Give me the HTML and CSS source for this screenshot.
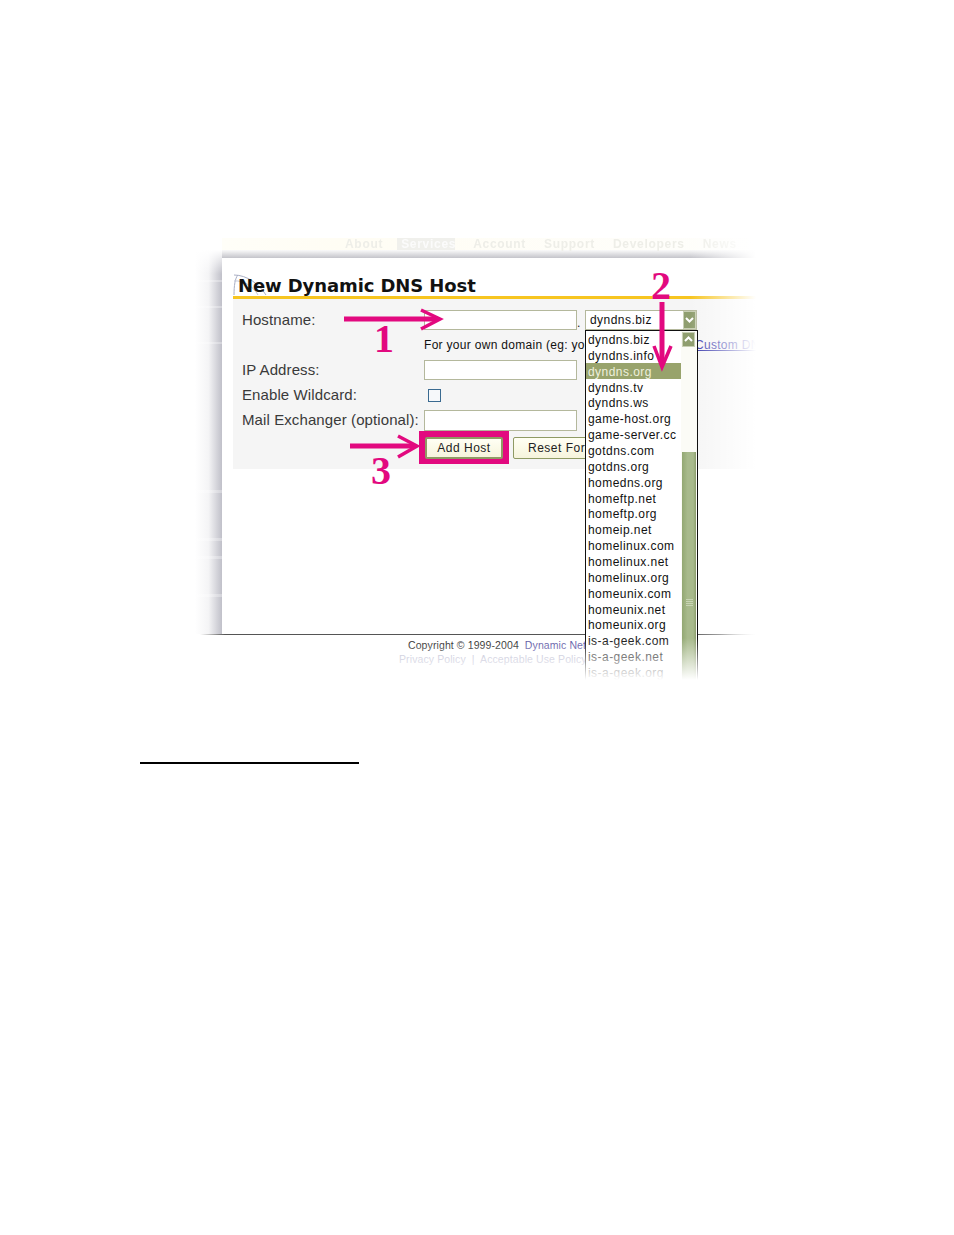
FILE: index.html
```html
<!DOCTYPE html>
<html lang="en">
  <head>
    <title>New Dynamic DNS Host</title>
    <meta charset="UTF-8">
    <link rel="stylesheet" href="styles.css">
  </head>
  <body>
    <div class="figure">
      <div class="nav">
        <span class="tab tab-about">About</span>
        <span class="tab tab-active">Services</span>
        <span class="tab">Account</span>
        <span class="tab">Support</span>
        <span class="tab">Developers</span>
        <span class="tab">News</span>
      </div>
      <div class="shell">
        <div class="panel">
          <div class="heading">
            <svg class="swirl" width="36" height="24" viewBox="0 0 36 24">
              <path d="M1 23C1 14 2 6 5 3" fill="none" stroke="#a9aec4"/>
              <path d="M1 3C14 3 26 12 33 23" fill="none" stroke="#a9aec4"/>
              <path d="M1 9C10 8 20 14 25 23" fill="none" stroke="#c3c7d6"/>
            </svg>
            <h1>New Dynamic DNS Host</h1>
          </div>
          <div class="form">
            <label>Hostname:</label>
            <input class="field" type="text">
            <span class="dot">.</span>
            <div class="select">
              <span>dyndns.biz</span>
              <span class="arrow-btn">
                <svg width="13" height="15" viewBox="0 0 13 15"><path d="M3 6l3.500 3.500L10 6" fill="none" stroke="#fff" stroke-width="2"/></svg>
              </span>
            </div>

            <div class="hint">
              <span class="hint-text">For your own domain (eg: yourdomain.com), use our</span>
              <a class="link">Custom DNS</a>
            </div>

            <label>IP Address:</label>
            <input class="field" type="text">
            <span></span><span></span>

            <label>Enable Wildcard:</label>
            <div><span class="check"></span></div>
            <span></span><span></span>

            <label>Mail Exchanger (optional):</label>
            <input class="field" type="text">
            <span></span><span></span>

            <span></span>
            <div class="buttons">
              <div class="highlight-box"><button class="btn btn-add">Add Host</button></div>
              <button class="btn btn-reset">Reset Form</button>
            </div>
          </div>
        </div>
      </div>
      <div class="rule"></div>
      <div class="footer">
        <div>Copyright &copy; 1999-2004 &nbsp;<a class="foot-link">Dynamic Network Services, Inc.</a></div>
        <div class="foot-links">Privacy Policy &nbsp;|&nbsp; Acceptable Use Policy</div>
      </div>

      <div class="fade-right"></div>

      <div class="list">
        <div class="items">
          <div>dyndns.biz</div>
          <div>dyndns.info</div>
          <div class="selected">dyndns.org</div>
          <div>dyndns.tv</div>
          <div>dyndns.ws</div>
          <div>game-host.org</div>
          <div>game-server.cc</div>
          <div>gotdns.com</div>
          <div>gotdns.org</div>
          <div>homedns.org</div>
          <div>homeftp.net</div>
          <div>homeftp.org</div>
          <div>homeip.net</div>
          <div>homelinux.com</div>
          <div>homelinux.net</div>
          <div>homelinux.org</div>
          <div>homeunix.com</div>
          <div>homeunix.net</div>
          <div>homeunix.org</div>
          <div>is-a-geek.com</div>
          <div>is-a-geek.net</div>
          <div>is-a-geek.org</div>
        </div>
        <div class="scrollbar">
          <span class="arrow-btn scroll-up">
            <svg width="13" height="15" viewBox="0 0 13 15"><path d="M3 9l3.500-3.500L10 9" fill="none" stroke="#fff" stroke-width="2"/></svg>
          </span>
          <div class="thumb"><span class="grip"></span></div>
        </div>
      </div>

      <div class="fade-bottom"></div>

      <svg class="arrows" width="590" height="460" viewBox="0 0 590 460">
        <path d="M154 89H248" stroke="#e2097f" stroke-width="5" fill="none"/>
        <path d="M231 80L250 89L231 99" stroke="#e2097f" stroke-width="3.500" fill="none"/>
        <path d="M160 216H224" stroke="#e2097f" stroke-width="5" fill="none"/>
        <path d="M208 206L227 216L208 227" stroke="#e2097f" stroke-width="3.500" fill="none"/>
        <path d="M472 72V134" stroke="#e2097f" stroke-width="5" fill="none"/>
        <path d="M464 116L472 137L481 116" stroke="#e2097f" stroke-width="3.500" fill="none"/>
      </svg>
      <span class="num num-1">1</span>
      <span class="num num-2">2</span>
      <span class="num num-3">3</span>
    </div>
    <div class="footnote-rule"></div>
  </body>
</html>
```
FILE: styles.css
```css
body {
  margin: 0;
  background: white;
  font-family: "Liberation Sans", sans-serif;
  color: #222;
}

.figure {
  position: relative;
  width: 590px;
  height: 460px;
  margin: 230px 0 0 190px;
  overflow: hidden;
}

.nav {
  display: flex;
  height: 12px;
  margin: 8px 0 0 32px;
  padding-left: 123px;
  gap: 18px;
  background: linear-gradient(to right, #fffef8, #fffdf4 120px, #fefefc);
  font-size: 12px;
  font-weight: bold;
  line-height: 12px;
  letter-spacing: 0.7px;
  color: #eeeee8;
  filter: blur(0.6px);
}

.tab-about {
  margin-right: -4px;
}

.tab-active {
  width: 58px;
  box-sizing: border-box;
  padding-left: 4px;
  background: #f0f0ec;
  color: #fbfbfb;
}

.shell {
  margin-left: 5px;
  padding: 8px 0 0 27px;
  background:
    linear-gradient(to bottom, white, rgba(255, 255, 255, 0)) left top / 27px 24px no-repeat,
    linear-gradient(to bottom, transparent 30px, rgba(255, 255, 255, 0.3) 30px, rgba(255, 255, 255, 0.3) 32px, transparent 32px, transparent 56px, rgba(255, 255, 255, 0.3) 56px, rgba(255, 255, 255, 0.3) 58px, transparent 58px, transparent 92px, rgba(255, 255, 255, 0.3) 92px, rgba(255, 255, 255, 0.3) 94px, transparent 94px, transparent 240px, rgba(255, 255, 255, 0.3) 240px, rgba(255, 255, 255, 0.3) 243px, transparent 243px, transparent 288px, rgba(255, 255, 255, 0.3) 288px, rgba(255, 255, 255, 0.3) 291px, transparent 291px, transparent 306px, rgba(255, 255, 255, 0.3) 306px, rgba(255, 255, 255, 0.3) 309px, transparent 309px, transparent 344px, rgba(255, 255, 255, 0.3) 344px, rgba(255, 255, 255, 0.3) 347px, transparent 347px) left top / 27px 100% no-repeat,
    linear-gradient(to right, rgba(150, 150, 165, 0), rgba(150, 150, 165, 0.1) 50%, rgba(150, 150, 165, 0.6)) left top / 27px 100% no-repeat,
    linear-gradient(to bottom, #fafafa, #c4c4ca) 27px top / 100% 8px no-repeat;
}

.panel {
  height: 376px;
  background: white;
  padding-left: 11px;
  border-radius: 4px 0 0 0;
}

.heading {
  position: relative;
  height: 38px;
  display: flex;
  align-items: flex-end;
}

.swirl {
  position: absolute;
  left: 0;
  bottom: 0;
}

h1 {
  position: relative;
  margin: 0 0 -2px 5px;
  font-family: "DejaVu Sans", sans-serif;
  font-size: 18px;
  line-height: 24px;
  font-weight: bold;
  color: #111;
  letter-spacing: -0.1px;
}

.form {
  display: grid;
  grid-template-columns: 182px 153px 8px 112px;
  grid-template-rows: 20px 30px 20px 30px 21px 33px;
  align-items: center;
  height: 173px;
  box-sizing: border-box;
  padding: 11px 0 0 9px;
  border-top: 3px solid #f7c520;
  background: #f5f5f5;
  font-size: 15px;
}

label {
  padding-bottom: 2px;
  letter-spacing: 0.1px;
  color: #3a3a3a;
  white-space: nowrap;
}

.field {
  box-sizing: border-box;
  width: 153px;
  height: 100%;
  margin: 0;
  padding: 0;
  border: 1px solid #b4b89c;
  background: white;
}

.dot {
  font-size: 12px;
  padding-top: 6px;
}

.select {
  box-sizing: border-box;
  display: flex;
  justify-content: space-between;
  align-items: center;
  height: 20px;
  padding: 0 0 1px 4px;
  background: white;
  border: 1px solid #b4b89c;
  font-size: 12px;
  letter-spacing: 0.45px;
  color: #111;
}

.arrow-btn {
  display: block;
  width: 13px;
  height: 15px;
  background: #8f9e6f;
  border: 1px solid #c8cfb4;
  box-sizing: border-box;
}

.arrow-btn svg {
  display: block;
  margin: -1px;
}

.select .arrow-btn {
  height: 18px;
  margin-bottom: -1px;
  padding-top: 1px;
}

.hint {
  grid-column: 2 / 5;
  display: flex;
  font-size: 12px;
  letter-spacing: 0.3px;
  white-space: nowrap;
  color: #111;
}

.hint-text {
  flex: none;
  width: 271px;
  overflow: hidden;
}

.link {
  color: #3333aa;
  text-decoration: underline;
}

.check {
  display: block;
  box-sizing: border-box;
  width: 13px;
  height: 13px;
  margin-left: 4px;
  border: 1px solid #3a6a90;
  background: #f6f8fa;
}

.buttons {
  grid-column: 2 / 5;
  display: flex;
  align-items: center;
  margin-left: -5px;
  gap: 4px;
  height: 33px;
}

.highlight-box {
  box-sizing: border-box;
  width: 90px;
  height: 33px;
  padding: 1px;
  border: 5px solid #e2097f;
  background: #e2097f;
}

.btn {
  box-sizing: border-box;
  height: 22px;
  margin: 0;
  padding: 0;
  font-family: "Liberation Sans", sans-serif;
  font-size: 12px;
  letter-spacing: 0.5px;
  color: #222;
  background: linear-gradient(#fffff4, #f6f4dc);
  border: 1px solid #8f9a64;
  border-radius: 2px;
}

.btn-add {
  display: block;
  width: 78px;
  border: 2px solid #8f9a64;
}

.btn-reset {
  width: 90px;
  text-align: left;
  padding-left: 14px;
  white-space: nowrap;
}

.rule {
  height: 1px;
  margin: 0 10px 0 10px;
  background: linear-gradient(to right, rgba(80, 80, 80, 0), #555 25px, #555 520px, rgba(80, 80, 80, 0));
}

.footer {
  padding: 3px 0 0 218px;
  font-size: 10.500px;
  line-height: 14px;
  white-space: nowrap;
  letter-spacing: 0.1px;
}

.foot-link {
  color: #554fa0;
}

.foot-links {
  margin-left: -9px;
  color: #b4b4cc;
}

.fade-right {
  position: absolute;
  top: 0;
  right: 0;
  width: 90px;
  height: 100%;
  background: linear-gradient(to right, rgba(255, 255, 255, 0), white 66px);
}

.list {
  position: absolute;
  left: 395px;
  top: 100px;
  box-sizing: border-box;
  display: flex;
  width: 113px;
  height: 380px;
  border: 1px solid #111;
  background: white;
  overflow: hidden;
}

.items {
  width: 95px;
  font-size: 12px;
  letter-spacing: 0.45px;
  color: #111;
}

.items div {
  padding: 3px 0 0 2px;
  line-height: 12.860px;
}

.items .selected {
  background: #98a36c;
  color: #eef0dc;
}

.scrollbar {
  position: relative;
  width: 16px;
  background: #fbfbf6;
}

.scroll-up {
  margin: 1px 0 0 1px;
}

.thumb {
  position: absolute;
  left: 1px;
  right: 1px;
  top: 121px;
  height: 260px;
  background: linear-gradient(to right, #93a873, #a8ba8c 40%, #a8ba8c 80%, #8c9e6e);
}

.grip {
  position: absolute;
  left: 4px;
  top: 147px;
  width: 7px;
  height: 7px;
  background: repeating-linear-gradient(#c8d4b4 0 1px, transparent 1px 2px);
}

.fade-bottom {
  position: absolute;
  left: 0;
  right: 0;
  top: 408px;
  bottom: 0;
  background: linear-gradient(to bottom, rgba(255, 255, 255, 0), white 42px);
}

.arrows {
  position: absolute;
  left: 0;
  top: 0;
}

.num {
  position: absolute;
  font-family: "Liberation Serif", serif;
  font-weight: bold;
  font-size: 40px;
  line-height: 40px;
  color: #e2097f;
}

.num-1 { left: 184px; top: 89px; }
.num-2 { left: 461px; top: 36px; }
.num-3 { left: 181px; top: 221px; }

.footnote-rule {
  width: 219px;
  height: 2px;
  margin: 72px 0 0 140px;
  background: black;
}
```
